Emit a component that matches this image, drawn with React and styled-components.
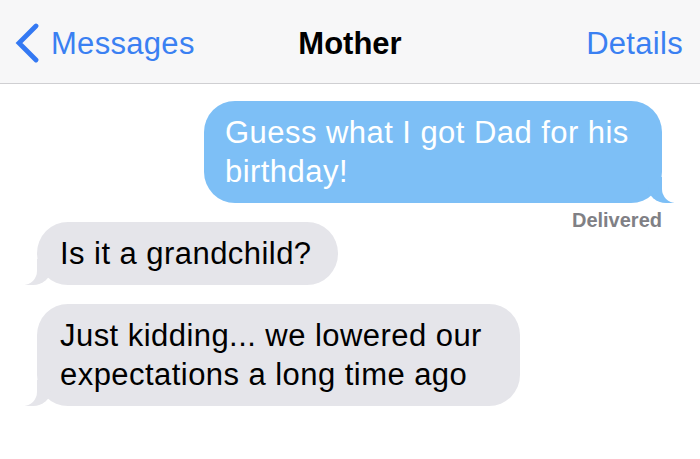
import React from 'react';
import styled, { createGlobalStyle } from 'styled-components';

const GlobalStyle = createGlobalStyle`
  * { box-sizing: border-box; }
  body {
    margin: 0;
    background: #ffffff;
    font-family: 'Liberation Sans', Arial, sans-serif;
    -webkit-font-smoothing: antialiased;
  }
`;

const BackChevron = () =>
  <svg width="24" height="40" viewBox="0 0 24 40">
    <polyline points="21,3 4,20 21,37" fill="none" stroke="#3479f3" strokeWidth="4.8" strokeLinecap="round" strokeLinejoin="miter" />
  </svg>;

const App = () =>
  <>
    <GlobalStyle />
    <Screen>
      <NavBar>
        <BackButton>
          <BackChevron />
          <NavLink>Messages</NavLink>
        </BackButton>
        <Title>Mother</Title>
        <NavLink $right>Details</NavLink>
      </NavBar>
      <Thread>
        <Bubble $mine $maxWidth={458}>Guess what I got Dad for his birthday!</Bubble>
        <Status>Delivered</Status>
        <Bubble>Is it a grandchild?</Bubble>
        <Bubble $maxWidth={483}>Just kidding... we lowered our expectations a long time ago</Bubble>
      </Thread>
    </Screen>
  </>;

const Screen = styled.div`
  width: 700px;
  height: 459px;
  overflow: hidden;
  background: #ffffff;
`;

const NavBar = styled.header`
  display: grid;
  grid-template-columns: 1fr auto 1fr;
  align-items: center;
  height: 84px;
  padding: 4px 17px 0 15px;
  background: #f7f7f8;
  border-bottom: 1px solid #cfcfd2;
  font-size: 31px;
  line-height: 39px;
  letter-spacing: 0.3px;
`;

const BackButton = styled.div`
  display: flex;
  align-items: center;
  gap: 12px;

  svg { margin-top: -2px; }
`;

const NavLink = styled.span`
  color: #3a80f2;
  justify-self: ${props => (props.$right ? 'end' : 'start')};
`;

const Title = styled.span`
  color: #000000;
  font-weight: 700;
  letter-spacing: 0;
  margin-left: 2px;
`;

const Thread = styled.main`
  display: flex;
  flex-direction: column;
  align-items: flex-start;
  padding: 17px 38px 0 37px;
`;

const Bubble = styled.div`
  position: relative;
  align-self: ${props => (props.$mine ? 'flex-end' : 'flex-start')};
  width: fit-content;
  max-width: ${props => (props.$maxWidth ? `${props.$maxWidth}px` : 'none')};
  margin-bottom: 19px;
  padding: ${props => (props.$mine ? '12px 30px 12px 21px' : '12px 26px 12px 23px')};
  border-radius: 31px;
  background: ${props => (props.$mine ? '#7dbff6' : '#e5e5ea')};
  color: ${props => (props.$mine ? '#ffffff' : '#000000')};
  font-size: 31px;
  line-height: 39px;
  letter-spacing: 0.45px;

  &::before,
  &::after {
    content: '';
    position: absolute;
    bottom: 0;
    height: 26px;
  }

  &::before {
    ${props => (props.$mine ? 'right: -12px;' : 'left: -12px;')}
    width: 26px;
    background: ${props => (props.$mine ? '#7dbff6' : '#e5e5ea')};
    ${props => (props.$mine
      ? 'border-bottom-left-radius: 18px 16px;'
      : 'border-bottom-right-radius: 18px 16px;')}
  }

  &::after {
    ${props => (props.$mine ? 'right: -30px;' : 'left: -30px;')}
    width: 30px;
    background: #ffffff;
    ${props => (props.$mine
      ? 'border-bottom-left-radius: 14px;'
      : 'border-bottom-right-radius: 14px;')}
  }
`;

const Status = styled.div`
  align-self: flex-end;
  margin: -12px 0 -8px 0;
  color: #808085;
  font-size: 20px;
  font-weight: 700;
  line-height: 20px;
  letter-spacing: 0;
`;

export default App;
